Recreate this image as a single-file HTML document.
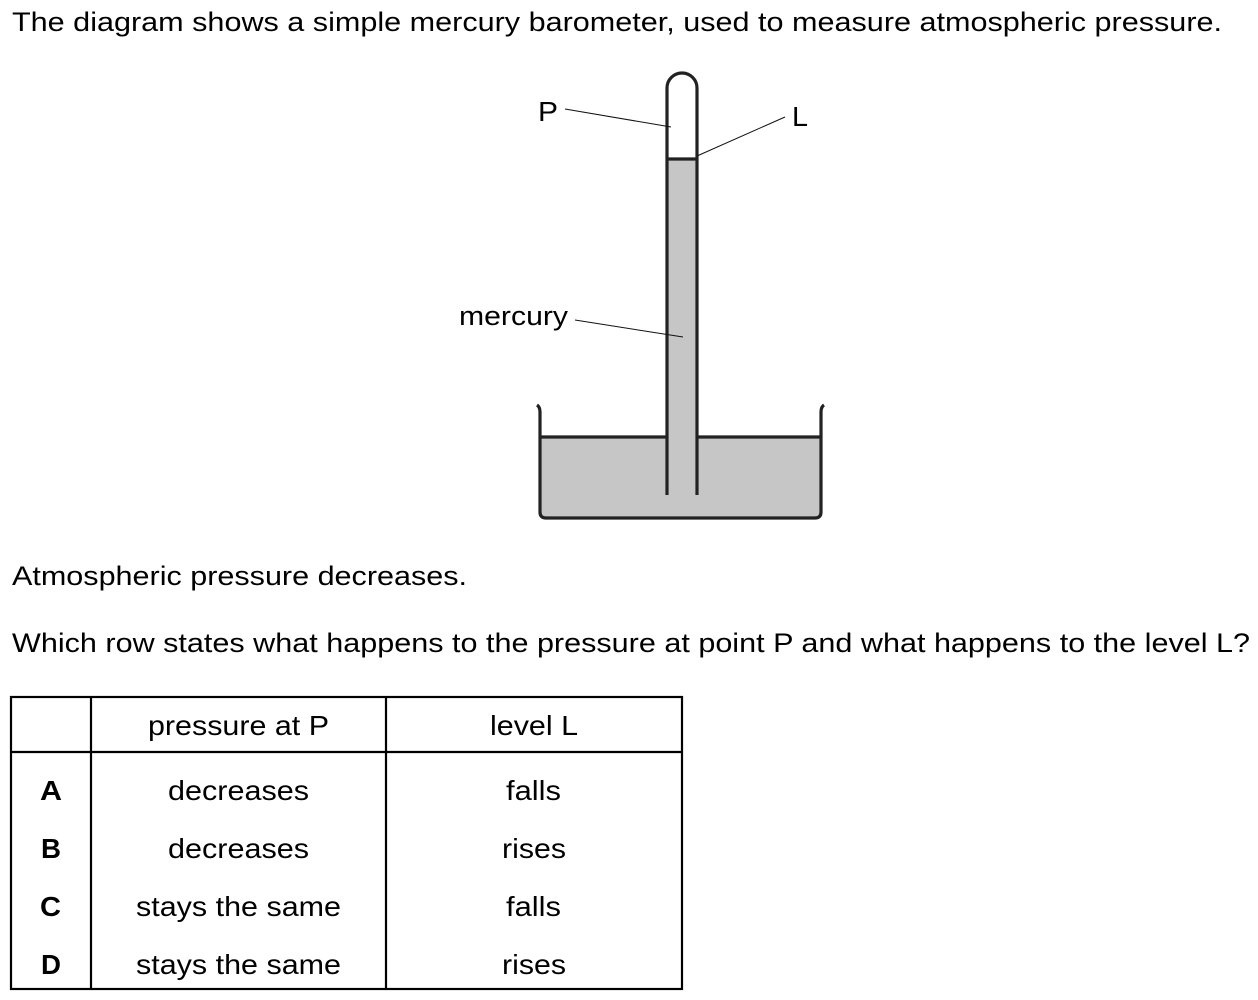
<!DOCTYPE html>
<html><head><meta charset="utf-8"><style>
html,body{margin:0;padding:0;background:#fff;width:1258px;height:1000px;overflow:hidden}
svg{display:block}
text{font-family:"Liberation Sans",Arial,sans-serif;fill:#000}
</style></head><body>
<svg width="1258" height="1000" viewBox="0 0 1258 1000" xmlns="http://www.w3.org/2000/svg">
<text x="12" y="31" font-size="27" textLength="1210" lengthAdjust="spacingAndGlyphs">The diagram shows a simple mercury barometer, used to measure atmospheric pressure.</text>

<path d="M540 437 H821 V512 Q821 518 815 518 H546 Q540 518 540 512 Z" fill="#c6c6c6"/>
<rect x="668" y="159" width="28" height="290" fill="#c6c6c6"/>
<g stroke="#222" stroke-width="3.2" fill="none">
<path d="M537 405 Q540 407 540 412 V512 Q540 518 546 518 H815 Q821 518 821 512 V412 Q821 407 824 405"/>
<line x1="540" y1="437" x2="667" y2="437"/>
<line x1="697" y1="437" x2="821" y2="437"/>
<path d="M667 495 V88 A15 15 0 0 1 697 88 V495"/>
<line x1="667" y1="159" x2="697" y2="159"/>
</g>
<g stroke="#111" stroke-width="1">
<line x1="565" y1="109" x2="671" y2="127"/>
<line x1="785" y1="117" x2="697" y2="156"/>
<line x1="575" y1="320" x2="683" y2="337"/>
</g>
<text x="538" y="121" font-size="28" textLength="20" lengthAdjust="spacingAndGlyphs">P</text>
<text x="792" y="126" font-size="28" textLength="16" lengthAdjust="spacingAndGlyphs">L</text>
<text x="459" y="325" font-size="27" textLength="109" lengthAdjust="spacingAndGlyphs">mercury</text>

<text x="12" y="585" font-size="27" textLength="455" lengthAdjust="spacingAndGlyphs">Atmospheric pressure decreases.</text>
<text x="12" y="652" font-size="27" textLength="1238" lengthAdjust="spacingAndGlyphs">Which row states what happens to the pressure at point P and what happens to the level L?</text>

<g stroke="#000" stroke-width="2.2" fill="none">
<rect x="11" y="697" width="671" height="292"/>
<line x1="91" y1="697" x2="91" y2="989"/>
<line x1="386" y1="697" x2="386" y2="989"/>
<line x1="11" y1="752" x2="682" y2="752"/>
</g>
<g font-size="28" lengthAdjust="spacingAndGlyphs">
<text x="148" y="735" textLength="181" lengthAdjust="spacingAndGlyphs">pressure at P</text>
<text x="490" y="735" textLength="88" lengthAdjust="spacingAndGlyphs">level L</text>
<text x="40" y="800" font-weight="bold" textLength="22" lengthAdjust="spacingAndGlyphs">A</text>
<text x="41" y="858" font-weight="bold" textLength="20" lengthAdjust="spacingAndGlyphs">B</text>
<text x="40" y="916" font-weight="bold" textLength="21" lengthAdjust="spacingAndGlyphs">C</text>
<text x="41" y="974" font-weight="bold" textLength="20" lengthAdjust="spacingAndGlyphs">D</text>
<text x="168" y="800" textLength="141" lengthAdjust="spacingAndGlyphs">decreases</text>
<text x="168" y="858" textLength="141" lengthAdjust="spacingAndGlyphs">decreases</text>
<text x="136" y="916" textLength="205" lengthAdjust="spacingAndGlyphs">stays the same</text>
<text x="136" y="974" textLength="205" lengthAdjust="spacingAndGlyphs">stays the same</text>
<text x="506" y="800" textLength="55" lengthAdjust="spacingAndGlyphs">falls</text>
<text x="502" y="858" textLength="64" lengthAdjust="spacingAndGlyphs">rises</text>
<text x="506" y="916" textLength="55" lengthAdjust="spacingAndGlyphs">falls</text>
<text x="502" y="974" textLength="64" lengthAdjust="spacingAndGlyphs">rises</text>
</g>
</svg>
</body></html>
